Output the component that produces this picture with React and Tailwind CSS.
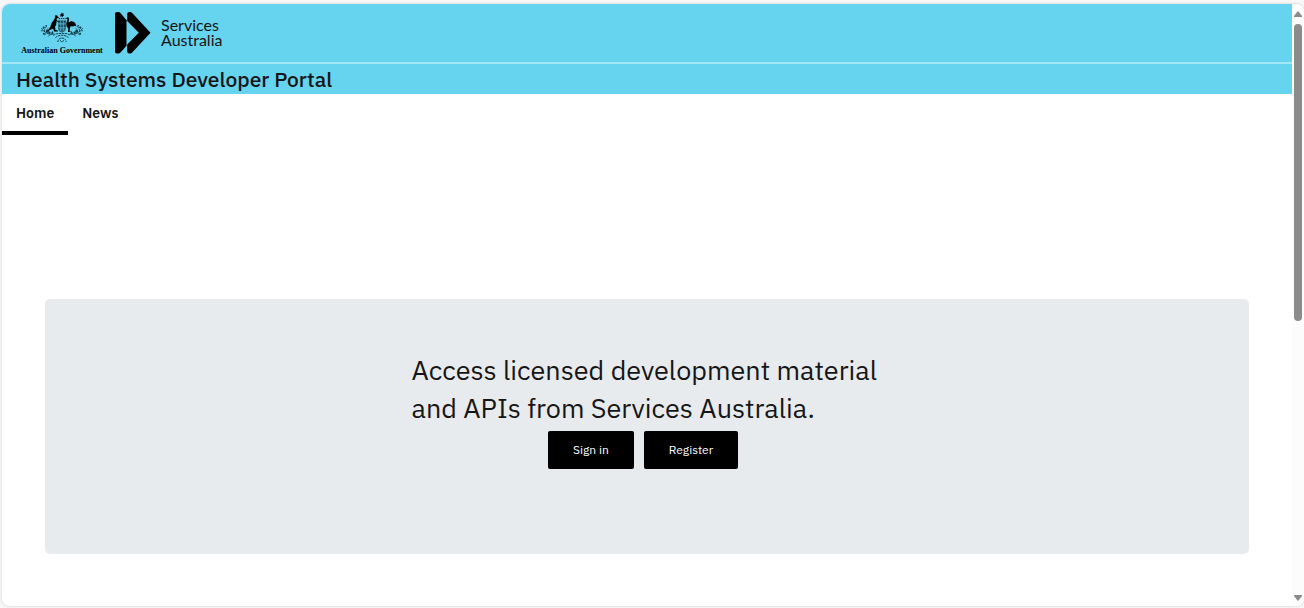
function CoatOfArms() {
  return (
    <svg viewBox="120 36 132 94" className="h-[31px] w-[44px]" aria-hidden="true">
      {/* star and wreath */}
      <path d="M186 37l2 4 4-1-2 4 3 3-4 1-1 4-3-3-4 2 1-4-3-3 4-1z" />
      <path d="M176 56h21" stroke="#000" strokeWidth="3" strokeDasharray="4 2" />
      {/* shield */}
      <path d="M174 61h24v24q0 9-12 14-12-5-12-14z" fill="#2b6678" />
      <path d="M174 72h24M182 61v32M190 61v32M176 84h20" stroke="#66d3ef" strokeWidth="1.6" />
      <path d="M177 65h4M184 66h4M192 65h4M177 78h4M185 79h3M192 78h4" stroke="#07262f" strokeWidth="3" />
      {/* kangaroo */}
      <path d="M167 44l2 3 2-3 1 5 5 4-4 2-3 1 0 5 6 4-1 2-6-3 0 9-4 8 1 9 8 3v2h-12l-3-9-6 3-9 5-7 1 9-7 5-8 3-10 6-8 4-7 1-6z" />
      {/* emu */}
      <path d="M198 56q3-5 7-4 3 2 2 7l-1 9 7-4q8-1 13 5l4 11-5-2-6 2-7-1-2 7-1 8 6 3h-11l1-11-5-6q-3-7 0-14l3-7z" />
      {/* wattle branches */}
      <g fill="none" stroke="#0d3a47" strokeWidth="2.4">
        <path d="M163 103q-16 4-27-5t-13-13M209 103q16 4 27-5t13-13" />
        <path d="M128 93l-6 0M132 97l2-10M138 101l-6 5M143 103l1-11M150 104l-5 6M154 104l4-10" />
        <path d="M244 93l6 0M240 97l-2-10M234 101l6 5M229 103l-1-11M222 104l5 6M218 104l-4-10" />
        <path d="M130 80l5 4 5-4M139 90l6-5M242 80l-5 4-5-4M233 90l-6-5" />
      </g>
      <g fill="#0d3a47">
        <circle cx="130" cy="84" r="3" />
        <circle cx="138" cy="78" r="2.5" />
        <circle cx="141" cy="94" r="4" />
        <circle cx="148" cy="99" r="3.5" />
        <circle cx="131" cy="102" r="3" />
        <circle cx="157" cy="100" r="3" />
        <circle cx="242" cy="84" r="3" />
        <circle cx="235" cy="78" r="2.5" />
        <circle cx="231" cy="94" r="4" />
        <circle cx="224" cy="99" r="3.5" />
        <circle cx="241" cy="102" r="3" />
        <circle cx="215" cy="100" r="3" />
      </g>
      {/* scroll */}
      <path d="M160 107q10-8 26-5 16-3 26 5M166 114q9-8 20-7 11-1 20 7M173 127q3-13 13-12 10-1 13 12M180 122l6 5 6-5" fill="none" stroke="#0d3a47" strokeWidth="3" strokeDasharray="7 2" />
    </svg>
  );
}

function ServicesMark() {
  return (
    <svg viewBox="0 0 36 42" className="h-[42px] w-[36px]" aria-hidden="true">
      <path d="M0 2Q0 0 2 0h1.500q1 0 2 1L11.500 8.200V33.800L5.500 40.500q-1 1-2 1H2q-2 0-2-2z" />
      <path d="M12.200 2Q12.200 0 14.200 0h1q1 0 2 1L35.500 20.800 17.200 40.500q-1 1-2 1h-1q-2 0-2-2V32.500L23.800 20.800 12.200 9z" />
    </svg>
  );
}

function Scrollbar() {
  return (
    <div className="flex w-3 shrink-0 flex-col items-center bg-[#fcfcfc] pt-[7px] pb-[5px]" aria-hidden="true">
      <svg viewBox="0 0 8 6" className="h-[6px] w-[8px] fill-[#8b8b8b]">
        <path d="M3.500 .4Q4 0 4.500 .4L8 5q.2 1-.6 1H.6Q-.2 6 0 5z" />
      </svg>
      <div className="mt-[7px] flex-1">
        <div className="h-[52%] w-2 rounded-full bg-[#8b8b8b]" />
      </div>
      <svg viewBox="0 0 8 6" className="h-[6px] w-[8px] fill-[#8b8b8b]">
        <path d="M3.500 5.600Q4 6 4.500 5.600L8 1q.2-1-.6-1H.6Q-.2 0 0 1z" />
      </svg>
    </div>
  );
}

const tabs = [
  { label: "Home", active: true },
  { label: "News", active: false },
];

export default function App() {
  return (
    <div className="flex min-h-screen bg-[#f7f7f7] pt-1 pb-0.5 pl-0.5 font-['IBM_Plex_Sans','Noto_Sans',sans-serif] text-[#161616]">
      <div className="flex flex-1 overflow-hidden rounded-lg bg-white shadow-[0_0_2px_1px_#e2e2e2]">
        <div className="min-w-0 flex-1">
          <header className="bg-[#66d3ef]">
            <div className="flex h-[60px] items-start border-b-2 border-[#a5e6f6] pt-2 pl-[19px]">
              <div className="flex w-[82px] flex-col items-center text-black">
                <CoatOfArms />
                <span className="font-['Liberation_Serif',serif] text-[8px] leading-[16px] font-bold whitespace-nowrap">
                  Australian Government
                </span>
              </div>
              <div className="ml-3">
                <ServicesMark />
              </div>
              <div className="ml-[10px] flex flex-col pt-[5px] font-['Lato',sans-serif] text-[16px] leading-[15px]">
                <span>Services</span>
                <span>Australia</span>
              </div>
            </div>
            <h1 className="px-[14px] text-[21px] leading-[30px] font-medium">
              Health Systems Developer Portal
            </h1>
          </header>

          <nav className="flex text-[14px] leading-[20px] font-semibold">
            {tabs.map((t) => (
              <a
                key={t.label}
                href="#"
                className={
                  "border-b-4 px-[14px] pt-[9px] pb-[8px] " +
                  (t.active ? "border-black" : "border-transparent")
                }
              >
                {t.label}
              </a>
            ))}
          </nav>

          <main className="px-[43px] pt-[164px] pb-[52px]">
            <section className="flex flex-col items-center rounded-[5px] bg-[#e8ebee] pt-[52px] pb-[85px]">
              <p className="w-[471px] text-[27px] leading-[38px]">
                Access licensed development material and APIs from Services Australia.
              </p>
              <div className="mt-[4px] mr-2 flex gap-[10px] text-[12px] leading-[18px] text-white">
                <button className="rounded-[2px] bg-black px-[25px] py-[10px]">Sign in</button>
                <button className="rounded-[2px] bg-black px-[25px] py-[10px]">Register</button>
              </div>
            </section>
          </main>
        </div>
        <Scrollbar />
      </div>
    </div>
  );
}
